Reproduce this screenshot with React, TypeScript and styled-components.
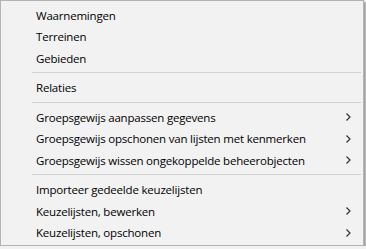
import styled, { createGlobalStyle } from "styled-components";

const GlobalStyle = createGlobalStyle`
  html, body {
    margin: 0;
    padding: 0;
    background: #f2f2f2;
  }
`;

type Entry =
  | { kind: "item"; label: string; submenu?: boolean }
  | { kind: "separator" };

const entries: Entry[] = [
  { kind: "item", label: "Waarnemingen" },
  { kind: "item", label: "Terreinen" },
  { kind: "item", label: "Gebieden" },
  { kind: "separator" },
  { kind: "item", label: "Relaties" },
  { kind: "separator" },
  { kind: "item", label: "Groepsgewijs aanpassen gegevens", submenu: true },
  { kind: "item", label: "Groepsgewijs opschonen van lijsten met kenmerken", submenu: true },
  { kind: "item", label: "Groepsgewijs wissen ongekoppelde beheerobjecten", submenu: true },
  { kind: "separator" },
  { kind: "item", label: "Importeer gedeelde keuzelijsten" },
  { kind: "item", label: "Keuzelijsten, bewerken", submenu: true },
  { kind: "item", label: "Keuzelijsten, opschonen", submenu: true },
];

const Menu = styled.ul`
  list-style: none;
  margin: 0;
  padding: 3.25px 0 2px;
  width: 362px;
  background: #f2f2f2;
  border: 1px solid #b4b4b4;
  box-shadow: 2px 2px 2px rgba(0, 0, 0, 0.35);
  font-family: "Open Sans", "Noto Sans", sans-serif;
  font-size: 11.5px;
  letter-spacing: -0.2px;
  color: #000;
`;

const Item = styled.li`
  display: flex;
  align-items: center;
  height: 21.5px;
  padding: 0 12px 0 35px;
  cursor: default;
`;

const Label = styled.span`
  flex: 1;
  white-space: nowrap;
`;

const Separator = styled.li`
  height: 1px;
  margin: 3.5px 2px 3.5px 31px;
  background: #d2d2d2;
`;

const Chevron = () => (
  <svg width="5" height="8" viewBox="0 0 5 8">
    <path d="M0.5 0.5 L4 4 L0.5 7.5" fill="none" stroke="#333" strokeWidth="1.2" />
  </svg>
);

export default function App() {
  return (
    <>
      <GlobalStyle />
      <Menu>
        {entries.map((entry, i) =>
          entry.kind === "separator" ? (
            <Separator key={i} />
          ) : (
            <Item key={i}>
              <Label>{entry.label}</Label>
              {entry.submenu && <Chevron />}
            </Item>
          )
        )}
      </Menu>
    </>
  );
}
